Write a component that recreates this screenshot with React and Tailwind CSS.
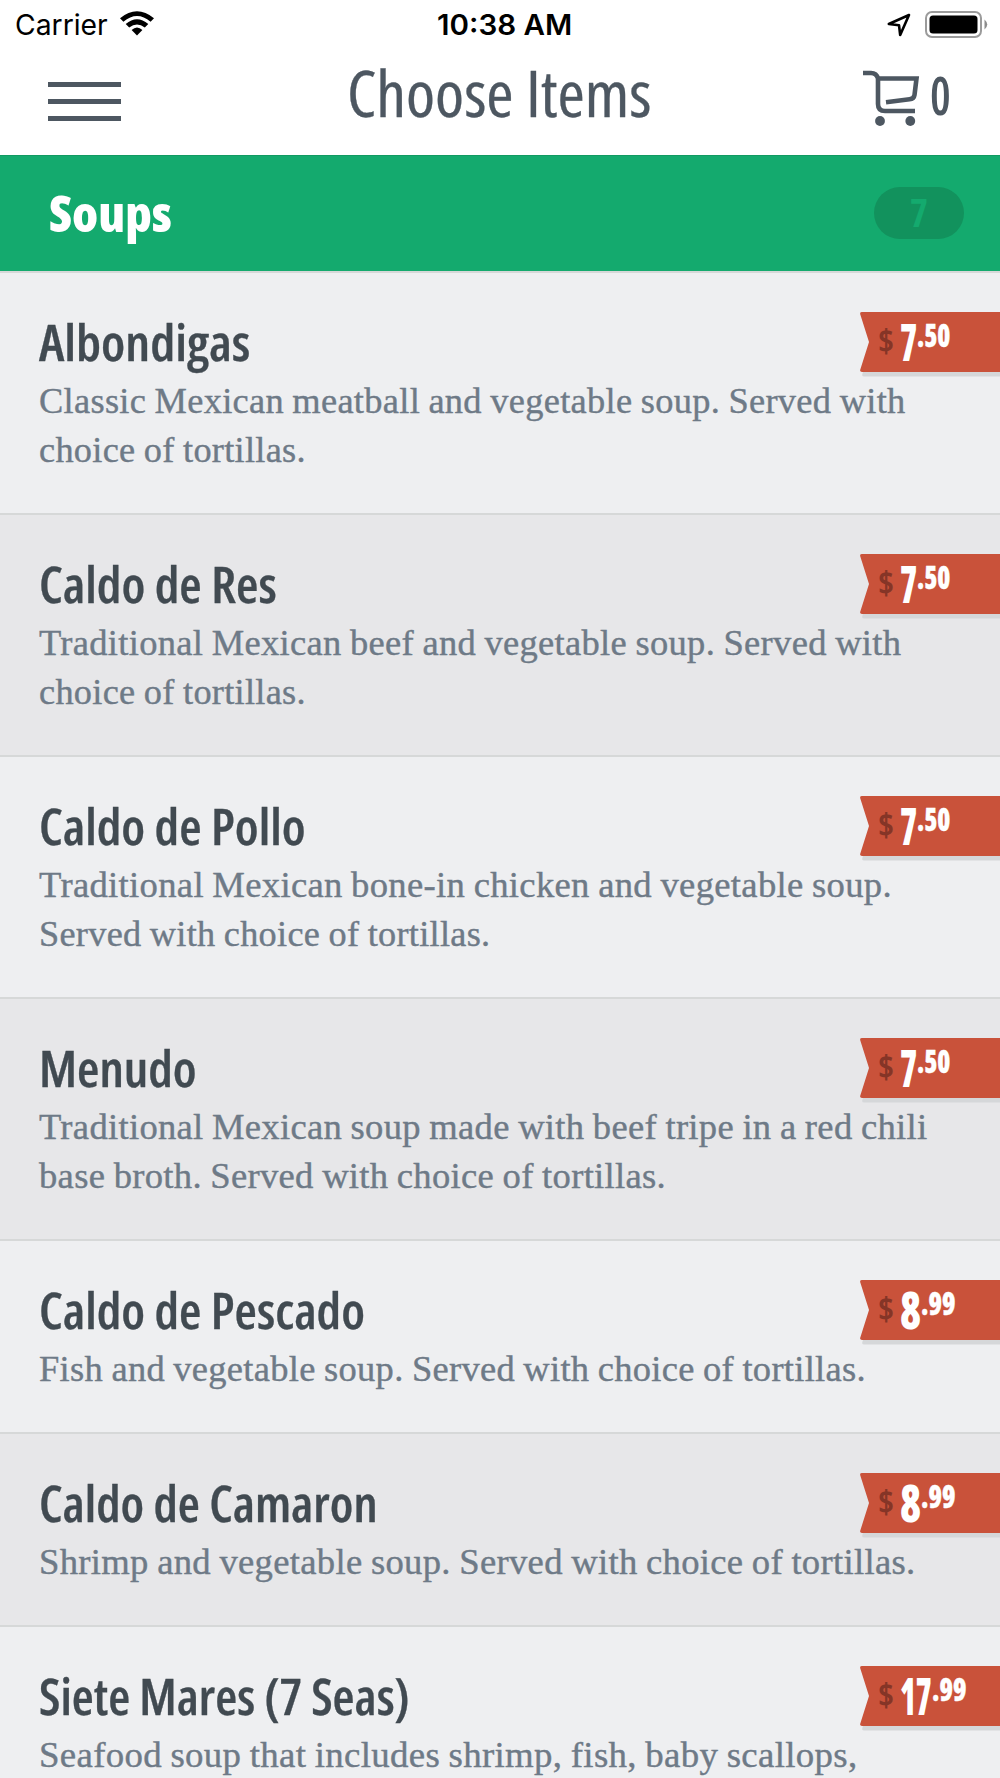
import { useLayoutEffect, useRef, useState } from "react";

const items = [
    {
        name: { text: "Albondigas", width: 211 },
        lines: [
            { text: "Classic Mexican meatball and vegetable soup. Served with", width: 867 },
            { text: "choice of tortillas.", width: 267 },
        ],
        price: { whole: "7", wholeWidth: 17, cents: ".50", centsWidth: 33 },
    },
    {
        name: { text: "Caldo de Res", width: 238 },
        lines: [
            { text: "Traditional Mexican beef and vegetable soup. Served with", width: 862 },
            { text: "choice of tortillas.", width: 267 },
        ],
        price: { whole: "7", wholeWidth: 17, cents: ".50", centsWidth: 33 },
    },
    {
        name: { text: "Caldo de Pollo", width: 267 },
        lines: [
            { text: "Traditional Mexican bone-in chicken and vegetable soup.", width: 853 },
            { text: "Served with choice of tortillas.", width: 451 },
        ],
        price: { whole: "7", wholeWidth: 17, cents: ".50", centsWidth: 33 },
    },
    {
        name: { text: "Menudo", width: 158 },
        lines: [
            { text: "Traditional Mexican soup made with beef tripe in a red chili", width: 888 },
            { text: "base broth. Served with choice of tortillas.", width: 627 },
        ],
        price: { whole: "7", wholeWidth: 17, cents: ".50", centsWidth: 33 },
    },
    {
        name: { text: "Caldo de Pescado", width: 326 },
        lines: [{ text: "Fish and vegetable soup. Served with choice of tortillas.", width: 827 }],
        price: { whole: "8", wholeWidth: 21, cents: ".99", centsWidth: 34 },
    },
    {
        name: { text: "Caldo de Camaron", width: 339 },
        lines: [{ text: "Shrimp and vegetable soup. Served with choice of tortillas.", width: 877 }],
        price: { whole: "8", wholeWidth: 21, cents: ".99", centsWidth: 34 },
    },
    {
        name: { text: "Siete Mares (7 Seas)", width: 371 },
        lines: [{ text: "Seafood soup that includes shrimp, fish, baby scallops,", width: 818 }],
        price: { whole: "17", wholeWidth: 32, cents: ".99", centsWidth: 34 },
    },
];

// Condenses or widens one line of text so that it takes exactly `width` pixels.
const FitText = ({ text, width, className = "" }) => {
    const ref = useRef(null);
    const [scale, setScale] = useState(1);

    useLayoutEffect(() => {
        setScale(width / ref.current.offsetWidth);
    }, [text, width]);

    return (
        <span className={`block shrink-0 ${className}`} style={{ width }}>
            <span
                ref={ref}
                className="block w-max origin-left whitespace-pre"
                style={{ transform: `scaleX(${scale})` }}
            >
                {text}
            </span>
        </span>
    );
};

const StatusBar = () => (
    <div className="grid h-[50px] grid-cols-3 items-center font-['Inter',sans-serif] text-[28px] leading-[50px] text-black">
        <div className="flex items-center gap-3 pl-[15px]">
            <FitText text="Carrier" width={93} />
            <svg className="mb-[3px] h-[25px] w-[34px]" viewBox="0 0 34 25">
                <path d="M0 7.2Q17 -6.8 34 7.2L30.6 10.8Q17 -0.6 3.4 10.8Z" />
                <path d="M5.7 13Q17 3.6 28.3 13L24.8 16.5Q17 10.3 9.2 16.5Z" />
                <path d="M11.6 19Q17 14 22.4 19L17 24.5Z" />
            </svg>
        </div>
        <div className="flex justify-center pl-2.5 font-semibold">
            <FitText text="10:38 AM" width={135} />
        </div>
        <div className="flex items-center justify-end pr-3">
            <svg className="mr-[14px] h-6 w-6" viewBox="0 0 24 24" fill="none" stroke="#000" strokeWidth="2.6" strokeLinejoin="round">
                <path d="M22 2L1.8 11L12 12.2L13.2 22Z" />
            </svg>
            <svg className="mb-0.5 h-[27px] w-[63px]" viewBox="0 0 63 27">
                <rect x="1" y="1" width="55" height="25" rx="6" fill="none" stroke="#9b9b9b" strokeWidth="2" />
                <rect x="4.5" y="4.5" width="48" height="18" rx="3.5" />
                <path d="M59.5 8.5Q65 13.5 59.5 18.5Z" fill="#8c8c8c" />
            </svg>
        </div>
    </div>
);

const CartIcon = () => (
    <svg className="h-[56px] w-[57px]" viewBox="0 0 57 56" fill="none" stroke="#4d5761" strokeWidth="4.6">
        <path d="M0 3H8Q13.5 3 15 8.5V34Q15 41 22 41H52" />
        <path d="M15 8.5H53.5L51.5 25Q51 28.8 46.5 29.3L23 32.2" />
        <circle cx="17" cy="51" r="4.9" fill="#4d5761" stroke="none" />
        <circle cx="47.3" cy="51" r="4.9" fill="#4d5761" stroke="none" />
    </svg>
);

const Navbar = () => (
    <nav className="grid h-[104px] grid-cols-3 text-[#4d5761]">
        <div className="flex flex-col gap-3 pt-8 pl-12">
            <div className="h-[5px] w-[73px] bg-[#4d5761]" />
            <div className="h-[5px] w-[73px] bg-[#4d5761]" />
            <div className="h-[5px] w-[73px] bg-[#4d5761]" />
        </div>
        <div className="flex justify-center">
            <FitText
                text="Choose Items"
                width={304}
                className="-ml-0.5 text-[63px] leading-[86px] [-webkit-text-stroke:0.3px_#4d5761]"
            />
        </div>
        <div className="flex justify-end pt-5 pr-[49px]">
            <CartIcon />
            <FitText text="0" width={21} className="ml-2.5 text-[53px] leading-[50px] font-semibold" />
        </div>
    </nav>
);

const SectionHeader = ({ title, count }) => (
    <div className="mt-px flex h-[116px] items-center justify-between border-t border-[#119a62] bg-[#14aa6e] pr-9 pb-0.5 pl-[49px]">
        <FitText text={title} width={123} className="text-[50px] leading-[60px] font-extrabold text-white" />
        <div className="flex h-[52px] w-[90px] items-center justify-center rounded-full bg-[#12925d]">
            <FitText text={count} width={18} className="pb-0.5 text-[40px] leading-[50px] font-bold text-[#14aa6e]" />
        </div>
    </div>
);

const PriceTag = ({ price }) => (
    <div className="absolute top-[39px] right-0 h-[66px] w-[140px]">
        <svg className="absolute inset-0" width="140" height="66" viewBox="0 0 140 66">
            <path d="M3 60H140V64.5H4Q1 64.5 3 60Z" fill="#d5d7d9" />
            <path d="M2 0H140V60H2Q-0.5 60 0.3 57.5L9 30L0.3 2.5Q-0.5 0 2 0Z" fill="#c9523a" />
        </svg>
        <div className="relative flex pl-[18px] font-extrabold text-white">
            <FitText text="$" width={16} className="mt-[7px] text-[32px] leading-[44px] font-bold text-[#853527]" />
            <FitText text={price.whole} width={price.wholeWidth} className="-mt-px ml-[5.5px] text-[51px] leading-[60px]" />
            <FitText text={price.cents} width={price.centsWidth} className="mt-px text-[32px] leading-[44px] [-webkit-text-stroke:0.4px_white]" />
        </div>
    </div>
);

const MenuItem = ({ item }) => (
    <li className="relative border-b-2 border-[#d6d8d8] bg-[#eeeff1] pt-[38px] pb-[38px] pl-[39px] even:bg-[#e7e7e9]">
        <h2>
            <FitText
                text={item.name.text}
                width={item.name.width}
                className="text-[51px] leading-[60px] font-semibold text-[#414a51] [-webkit-text-stroke:0.3px_#414a51]"
            />
        </h2>
        <div className="mt-1.5 font-['Liberation_Serif',serif] text-[36px] leading-[49px] tracking-[0.3px] text-[#6e7a87] [word-spacing:-1px] [-webkit-text-stroke:0.4px_#6e7a87]">
            {item.lines.map((line) => (
                <FitText key={line.text} text={line.text} width={line.width} />
            ))}
        </div>
        <PriceTag price={item.price} />
    </li>
);

const App = () => (
    <div className="h-[1778px] w-[1000px] overflow-hidden bg-white font-['Open_Sans',sans-serif] font-stretch-condensed">
        <StatusBar />
        <Navbar />
        <SectionHeader title="Soups" count="7" />
        <ul className="border-t-2 border-[#d6d8d8]">
            {items.map((item) => (
                <MenuItem key={item.name.text} item={item} />
            ))}
        </ul>
    </div>
);

export default App;
